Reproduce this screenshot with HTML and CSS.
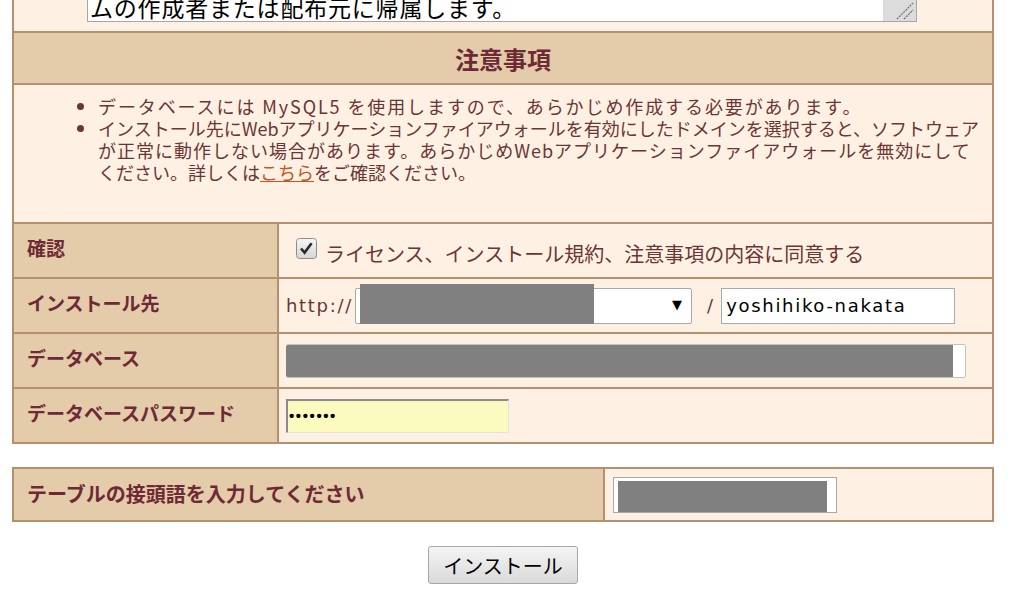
FILE: index.html
```html
<!DOCTYPE html>
<html lang="ja">
<head>
    <meta charset="UTF-8">
    <meta name="viewport" content="width=device-width, initial-scale=1.0">
    <title>インストール</title>
    <link rel="stylesheet" href="styles.css">
</head>
<body>
  <div class="page">

    <div class="panel panel-top">
      <div class="terms-row">
        <div class="terms-box">
          <div class="terms-text">ムの作成者または配布元に帰属します。</div>
          <div class="terms-grip">
            <svg width="33" height="22" viewBox="0 0 33 22">
              <path d="M14 19 L30 3 M21 19 L30 10" stroke="#6e6e6e" stroke-width="1.3" stroke-dasharray="2 1" fill="none"/>
            </svg>
          </div>
        </div>
      </div>

      <div class="section-head">注意事項</div>

      <div class="notes">
        <ul>
          <li class="note-db">データベースには MySQL5 を使用しますので、あらかじめ作成する必要があります。</li>
          <li>インストール先にWebアプリケーションファイアウォールを有効にしたドメインを選択すると、ソフトウェア<br><span class="note-wide">が正常に動作しない場合があります。あらかじめWebアプリケーションファイアウォールを無効にして</span><br>ください。詳しくは<a href="#">こちら</a>をご確認ください。</li>
        </ul>
      </div>

      <div class="row">
        <div class="row-label">確認</div>
        <div class="row-value">
          <span class="check">
            <svg width="21" height="21" viewBox="0 0 21 21">
              <defs>
                <linearGradient id="cb" x1="0" y1="0" x2="0" y2="1">
                  <stop offset="0" stop-color="#f6f6f6"/>
                  <stop offset="1" stop-color="#d6d6d6"/>
                </linearGradient>
              </defs>
              <rect x="0.5" y="0.5" width="20" height="20" rx="3" fill="url(#cb)" stroke="#8d8d8d"/>
              <path d="M5 10.5 L8.6 14.6 L15.6 5.2" stroke="#2a2a2a" stroke-width="2.6" fill="none"/>
            </svg>
          </span>
          <span class="agree">ライセンス、インストール規約、注意事項の内容に同意する</span>
        </div>
      </div>

      <div class="row">
        <div class="row-label">インストール先</div>
        <div class="row-value">
          <span class="latin">http://</span>
          <div class="domain-select">
            <span class="redact redact-select"></span>
            <span class="arrow">▼</span>
          </div>
          <span class="latin slash">/</span>
          <div class="text-input">yoshihiko-nakata</div>
        </div>
      </div>

      <div class="row">
        <div class="row-label">データベース</div>
        <div class="row-value">
          <div class="db-input"><span class="redact redact-db"></span></div>
        </div>
      </div>

      <div class="row">
        <div class="row-label">データベースパスワード</div>
        <div class="row-value">
          <div class="pass-input">•••••••</div>
        </div>
      </div>
    </div>

    <div class="panel panel-prefix">
      <div class="row row-wide">
        <div class="row-label">テーブルの接頭語を入力してください</div>
        <div class="row-value">
          <div class="prefix-input"><span class="redact redact-prefix"></span></div>
        </div>
      </div>
    </div>

    <div class="actions">
      <button class="install-btn" type="button">インストール</button>
    </div>

  </div>
</body>
</html>
```

FILE: styles.css
```css
body {
  margin: 0;
  background: #ffffff;
  font-family: "Noto Sans CJK JP", sans-serif;
  color: #6b3535;
}

.page {
  margin-left: 12px;
  width: 982px;
}

.panel {
  box-sizing: border-box;
  width: 982px;
  border: 2px solid #b68f6e;
}

.panel-top {
  border-top: none;
}

/* agreement textarea, scrolled to the end */
.terms-row {
  height: 31px;
  padding-left: 73px;
  background: #fef1e3;
}

.terms-box {
  display: flex;
  width: 828px;
  height: 21px;
  border: 1px solid #a6a6a6;
  border-top: none;
  background: #ffffff;
  overflow: hidden;
}

.terms-text {
  flex: 1;
  padding-left: 2px;
  font-size: 23px;
  line-height: 15px;
  letter-spacing: 0.8px;
  color: #000000;
  white-space: nowrap;
  overflow: hidden;
}

.terms-grip {
  width: 33px;
  background: #dcdcdc;
}

.section-head {
  display: flex;
  align-items: center;
  justify-content: center;
  height: 50px;
  border-top: 2px solid #b68f6e;
  border-bottom: 2px solid #b68f6e;
  background: #e4cba9;
  font-size: 24px;
  font-weight: bold;
  color: #6d2a36;
}

.notes {
  box-sizing: border-box;
  height: 137px;
  padding-top: 10px;
  background: #fef1e3;
}

.notes ul {
  margin: 0;
  padding-left: 84px;
  font-size: 18px;
  line-height: 22px;
  white-space: nowrap;
}

.notes .note-db {
  letter-spacing: 1.9px;
}

.notes .note-wide {
  letter-spacing: 1px;
}

.notes a {
  color: #c5561d;
}

/* form rows */
.row {
  box-sizing: border-box;
  display: grid;
  grid-template-columns: 265px 1fr;
  height: 55px;
  border-top: 2px solid #b68f6e;
}

.row-label {
  box-sizing: border-box;
  display: flex;
  align-items: center;
  padding: 0 0 7px 13px;
  border-right: 2px solid #b68f6e;
  background: #e4cba9;
  font-size: 19px;
  font-weight: bold;
  color: #6d2a36;
  white-space: nowrap;
}

.row-value {
  display: flex;
  align-items: center;
  padding-left: 7px;
  background: #fef1e3;
}

.check {
  display: flex;
  margin: 0 8px 4px 10px;
}

.agree {
  padding-top: 6px;
  font-size: 20px;
}

.latin {
  font-family: "DejaVu Sans", sans-serif;
  font-size: 18px;
  letter-spacing: 1.7px;
  color: #6b3535;
}

.slash {
  margin: 0 8px 0 15px;
  letter-spacing: 0;
}

.domain-select {
  position: relative;
  box-sizing: border-box;
  width: 337px;
  height: 36px;
  margin-left: 2px;
  border: 1px solid #a9a9a9;
  border-radius: 2px;
  background: #ffffff;
}

.redact {
  display: block;
  background: #808080;
}

.redact-select {
  position: absolute;
  left: 4px;
  top: -5px;
  width: 234px;
  height: 40px;
}

.arrow {
  position: absolute;
  right: 9px;
  top: 8px;
  font-family: "DejaVu Sans", sans-serif;
  font-size: 13px;
  color: #000000;
}

.text-input {
  box-sizing: border-box;
  width: 234px;
  height: 36px;
  padding-left: 4px;
  border: 1px solid #a9a9a9;
  background: #ffffff;
  font-family: "DejaVu Sans", sans-serif;
  font-size: 18px;
  line-height: 33px;
  letter-spacing: 1.7px;
  color: #000000;
}

.db-input {
  box-sizing: border-box;
  width: 680px;
  height: 34px;
  border: 1px solid #c2c2c2;
  border-radius: 2px;
  background: #ffffff;
}

.redact-db {
  width: 667px;
  height: 32px;
  margin: 0 0 0 -1px;
  border-radius: 2px 0 0 2px;
}

.pass-input {
  box-sizing: border-box;
  width: 223px;
  height: 34px;
  padding-left: 1px;
  border-top: 2px solid #8c8c8c;
  border-left: 2px solid #8c8c8c;
  border-right: 1px solid #e2e2e2;
  border-bottom: 1px solid #e2e2e2;
  background: #fbfbbf;
  font-family: "Liberation Sans", sans-serif;
  font-size: 15px;
  font-weight: bold;
  line-height: 30px;
  letter-spacing: 1.6px;
  color: #000000;
}

/* table prefix panel */
.panel-prefix {
  margin-top: 23px;
}

.row-wide {
  grid-template-columns: 591px 1fr;
  height: 51px;
  border-top: none;
}

.row-wide .row-label {
  padding-bottom: 3px;
  font-size: 20px;
}

.row-wide .row-value {
  padding-left: 8px;
}

.prefix-input {
  box-sizing: border-box;
  width: 224px;
  height: 36px;
  padding: 3px 0 0 4px;
  border: 1px solid #a9a9a9;
  background: #ffffff;
}

.redact-prefix {
  width: 209px;
  height: 31px;
}

.actions {
  margin-top: 24px;
  text-align: center;
}

.install-btn {
  width: 150px;
  height: 38px;
  padding: 0;
  border: 1px solid #a8a8a8;
  border-radius: 3px;
  background: linear-gradient(#f4f4f4, #dadada);
  font-family: "Noto Sans CJK JP", sans-serif;
  font-size: 20px;
  color: #000000;
}
```
